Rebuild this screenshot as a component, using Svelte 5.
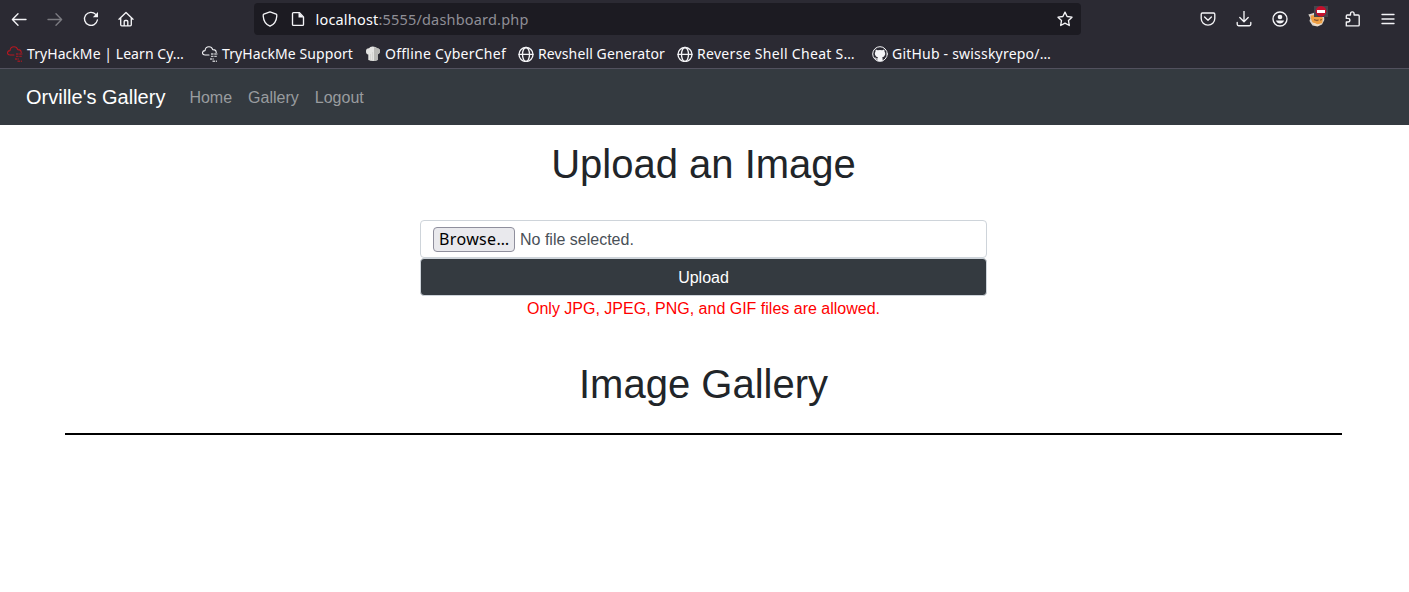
<script>
  const bookmarks = [
    { icon: 'cloud-red', label: 'TryHackMe | Learn Cy…', box: 163, text: 157 },
    { icon: 'cloud', label: 'TryHackMe Support', box: 131, text: 131 },
    { icon: 'chef', label: 'Offline CyberChef', box: 121, text: 121 },
    { icon: 'globe', label: 'Revshell Generator', box: 127, text: 127 },
    { icon: 'globe', label: 'Reverse Shell Cheat S…', box: 163, text: 158 },
    { icon: 'github', label: 'GitHub - swisskyrepo/…', box: 163, text: 159 }
  ];
  const links = ['Home', 'Gallery', 'Logout'];

  // Tracks a label so that it fills the given width.
  function fit(node, width) {
    const natural = node.getBoundingClientRect().width;
    const count = node.textContent.length;
    node.style.letterSpacing = `${(width - natural) / count}px`;
  }
</script>

<header class="chrome">
  <div class="toolbar">
    <div class="tools nav-tools">
      <svg viewBox="0 0 16 16"><path d="M15 8.5H1.5M7 2.8 1.4 8.5 7 14.2" /></svg>
      <svg viewBox="0 0 16 16" class="off"><path d="M1 8.5h13.5M9 2.8 14.6 8.5 9 14.2" /></svg>
      <svg viewBox="0 0 16 16"><path d="M14.4 9A6.5 6.5 0 1 1 12.7 3.4" /><path class="solid" d="M15 1v5.2H9.8z" /></svg>
      <svg viewBox="0 0 16 16" class="home"><path d="M1 8.3 8 1.5l7 6.8M2.7 7v6.8q0 1 1 1h8.6q1 0 1-1V7M6.2 14.8v-4.3q0-1 1-1h1.6q1 0 1 1v4.3" /></svg>
    </div>
    <div class="urlbar">
      <svg viewBox="0 0 16 16"><path d="M8 .9 14.2 3.2Q14.9 3.5 14.8 5C14.5 9.8 12.5 13.4 8 15.2 3.5 13.4 1.5 9.8 1.2 5Q1.1 3.5 1.8 3.2z" /></svg>
      <svg viewBox="0 0 16 16" class="doc"><path d="M3.5 1.6h5.7l4.3 4.3v7.5q0 1-1 1h-9q-1 0-1-1V2.6q0-1 1-1z" /><path class="solid" d="M8.5 1.5v5h5z" /></svg>
      <span class="address"><span use:fit={213}><b>localhost</b>:5555/dashboard.php</span></span>
      <svg viewBox="0 0 16 16" class="star"><path d="m8 1.1 2.1 4.4 4.9.7-3.5 3.4.8 4.9L8 12.2l-4.3 2.3.8-4.9L1 6.2l4.9-.7z" /></svg>
    </div>
    <div class="tools side-tools">
      <svg viewBox="0 0 16 16"><path d="M2.4 2h11.2q1.2 0 1.2 1.2v4.3a6.8 6.6 0 0 1-13.6 0V3.2Q1.2 2 2.4 2zM4.6 6 8 9.2 11.4 6" /></svg>
      <svg viewBox="0 0 16 16"><path d="M8 0v10.5M3.8 6.5 8 10.7l4.2-4.2M1.2 11.5v1.8q0 1.4 1.4 1.4h10.8q1.4 0 1.4-1.4v-1.8" /></svg>
      <svg viewBox="0 0 16 16"><circle cx="8" cy="8" r="7" /><circle class="solid" cx="8" cy="6" r="2.3" /><path class="solid" d="M3.9 9.6h8.2Q11 12.6 8 12.6T3.9 9.6z" /></svg>
      <svg viewBox="0 0 20 21" class="fox">
        <path fill="#d9d3cb" d="M.3 8.500 4 7.500l4-1.500 8 3 .3 5-2.300 4.500-4.500 2-5-1L1.500 15l.8-3z" />
        <path fill="#f0a044" d="m2.500 9.500 4-.500L9 7l6 5-.8 5-4.200 1.500-5.500-2L3 13z" />
        <path fill="#8c5a32" d="m6 13 3 .8 1.500-.6.2 1.200-1.700.8-3-1zM12 13.500l2-.5v1l-2 .8z" />
        <path fill="#f3ddc4" d="m3.500 16.500 3 .5 3 1.500 3.500-1-2.500 2.300h-3z" />
        <path fill="#45444c" d="M6 0h14v11H6z" />
        <circle cx="13" cy="5.300" r="5.300" fill="#c50f2c" />
        <path fill="#fff" d="M9 4h8v3H9z" />
      </svg>
      <svg viewBox="0 0 16 16" class="puzzle"><path d="M1.300 14.900V11h1.600q2 0 2-1.800t-2-1.800H1.300V5q0-1 1-1h3.200V2.800Q5.500.9 7.300.9t1.800 1.900V4h4.100q1 0 1 1v8.900q0 1-1 1z" /></svg>
      <svg viewBox="0 0 16 16" class="menu"><path d="M2 3.500h12M2 8h12M2 12.500h12" /></svg>
    </div>
  </div>
  <div class="bookmarks">
    {#each bookmarks as mark}
      <div class="mark">
        {#if mark.icon === 'globe'}
          <svg viewBox="0 0 16 16"><circle cx="8" cy="8.500" r="7" /><ellipse cx="8" cy="8.500" rx="3.500" ry="7" /><path d="M1 8.300h14" /></svg>
        {:else if mark.icon === 'github'}
          <svg viewBox="0 0 16 16"><circle cx="8" cy="8" r="7.300" stroke-width="1" /><path class="solid" d="m3.700 3.400 2.100.9q2.200-.5 4.400 0l2.100-.9.3 2.400q1 1.200.5 3-.6 2.200-3 2.600.5.5.5 1.400v2.400H5.500v-1.800q-2 .3-2.600-1.500l-.7-.7q1.200-.1 1.800 1 .6.5 1.500.3l.5-1.100q-2.400-.4-3-2.600-.5-1.800.4-3z" /></svg>
        {:else if mark.icon === 'chef'}
          <svg viewBox="0 0 16 16" class="chef"><path fill="#e4e4e2" d="M3.300 14V8.600Q.8 8 1 5.200.9 2.300 4 2.300q1-1.800 3.800-1.700T12 2.300q2.800 0 3 2.800.2 2.700-2.300 3.500V14q-4.700 1.800-9.400 0z" /><path fill="#b9b9b6" d="M9 1.200q3-.3 3 1.100 2.800 0 3 2.800.2 2.700-2.300 3.500V14q-2 .9-3.700.9z" /><path fill="#cfcfcc" d="M5 8h.7v6.400H5zM7.200 6h.7v8.700h-.7z" /></svg>
        {:else}
          <svg viewBox="0 0 16 16" class:red={mark.icon === 'cloud-red'}>
            <path stroke-width="1.100" d="M7 9H3Q.5 9 .5 6.800T3 4.600Q3.500.8 7 .8q2.800 0 3.700 2.800 3.500-.1 3.500 2.900" />
            <path stroke-linecap="butt" stroke-width="1.400" stroke-dasharray="2.500 .8" opacity=".75" d="M9 8h7M9 10.400h6M8 13h4M10.500 15.200H15" />
          </svg>
        {/if}
        <span class="label" style:width="{mark.box}px"><span use:fit={mark.text}>{mark.label}</span></span>
      </div>
    {/each}
  </div>
</header>

<nav class="navbar">
  <a class="brand" href="#top">Orville's Gallery</a>
  {#each links as link}
    <a href="#{link}">{link}</a>
  {/each}
</nav>

<main>
  <h1>Upload an Image</h1>
  <form>
    <div class="file">
      <button type="button" class="browse"><span use:fit={70.5}>Browse…</span></button>
      <span>No file selected.</span>
    </div>
    <button type="button" class="upload">Upload</button>
  </form>
  <p class="error">Only JPG, JPEG, PNG, and GIF files are allowed.</p>
  <h1 class="second">Image Gallery</h1>
  <hr />
</main>

<style>
  :global(body) {
    background: #fff;
    overflow: hidden;
  }
  .chrome {
    box-sizing: border-box;
    height: 69px;
    background: #2b2a33;
    border-bottom: 1px solid #52515e;
    color: #fbfbfe;
    font-family: 'Noto Sans', sans-serif;
  }
  svg {
    display: block;
    flex: none;
    width: 16px;
    height: 16px;
    fill: none;
    stroke: #f4f4f7;
    stroke-width: 1.35;
    stroke-linecap: round;
    stroke-linejoin: round;
  }
  .solid {
    fill: #f4f4f7;
    stroke: none;
  }
  .off {
    opacity: 0.4;
  }
  .red {
    stroke: #b81720;
  }
  .chef {
    stroke: none;
  }
  .toolbar {
    display: flex;
    height: 38px;
    align-items: center;
  }
  .tools {
    display: flex;
    align-items: center;
    gap: 20px;
  }
  .nav-tools {
    box-sizing: border-box;
    width: 254px;
    padding-left: 11px;
  }
  .home {
    margin-left: -1px;
  }
  .urlbar {
    display: flex;
    box-sizing: border-box;
    align-items: center;
    width: 827px;
    height: 32px;
    padding: 0 8px;
    border-radius: 4px;
    background: #1c1b22;
  }
  .doc {
    margin-left: 12px;
  }
  .address {
    flex: 1;
    margin-left: 9.5px;
    color: #8f8e96;
    font-size: 14.5px;
    line-height: 32px;
    white-space: nowrap;
  }
  .address b {
    color: #fbfbfe;
    font-weight: 400;
  }
  .side-tools {
    margin-left: 119px;
  }
  .fox {
    width: 20px;
    height: 21px;
    margin: -6px -4px 0 0;
    stroke: none;
  }
  .puzzle {
    margin-left: 1px;
  }
  .menu {
    margin-left: -1px;
  }
  .bookmarks {
    display: flex;
    align-items: center;
    gap: 12px;
    height: 32px;
    padding-left: 7px;
  }
  .mark {
    display: flex;
    align-items: center;
    gap: 4px;
  }
  .label {
    font-size: 14px;
    line-height: 20px;
    white-space: nowrap;
  }
  .navbar {
    display: flex;
    align-items: center;
    box-sizing: border-box;
    height: 56px;
    padding-left: 26px;
    gap: 16px;
    background: #343a40;
    font: 16px/24px 'Liberation Sans', Arial, sans-serif;
  }
  .navbar a {
    padding-top: 2px;
    color: #999c9f;
    text-decoration: none;
  }
  .navbar .brand {
    margin-right: 8px;
    padding: 0;
    color: #fff;
    font-size: 20px;
    line-height: 30px;
  }
  main {
    width: 1277px;
    margin-left: 65px;
    color: #212529;
    font: 16px/24px 'Liberation Sans', Arial, sans-serif;
    text-align: center;
  }
  h1 {
    margin: 0;
    padding-top: 15px;
    font-size: 40px;
    font-weight: 400;
    line-height: 48px;
  }
  form {
    width: 567px;
    margin: 32px auto 0;
  }
  .file {
    display: flex;
    align-items: center;
    box-sizing: border-box;
    height: 38px;
    padding: 2px 0 0 12px;
    gap: 5px;
    border: 1px solid #ced4da;
    border-radius: 4px;
    color: #495057;
  }
  .browse {
    box-sizing: border-box;
    width: 82px;
    height: 25px;
    margin-top: -1px;
    padding: 0 5px;
    border: 1px solid #8f8f9d;
    border-radius: 4px;
    background: #e9e9ed;
    color: #000;
    font: 16px/21px 'Noto Sans', sans-serif;
    text-align: left;
    white-space: nowrap;
  }
  .upload {
    display: block;
    box-sizing: border-box;
    width: 100%;
    height: 38px;
    padding: 2px 0 0;
    border: 1px solid #ced4da;
    border-radius: 4px;
    background: #343a40;
    color: #fff;
    font: inherit;
  }
  .error {
    margin: 0;
    padding-top: 1px;
    color: red;
  }
  .second {
    padding-top: 39px;
  }
  hr {
    height: 2px;
    margin: 25px 0 0;
    border: 0;
    background: #000;
  }
</style>
